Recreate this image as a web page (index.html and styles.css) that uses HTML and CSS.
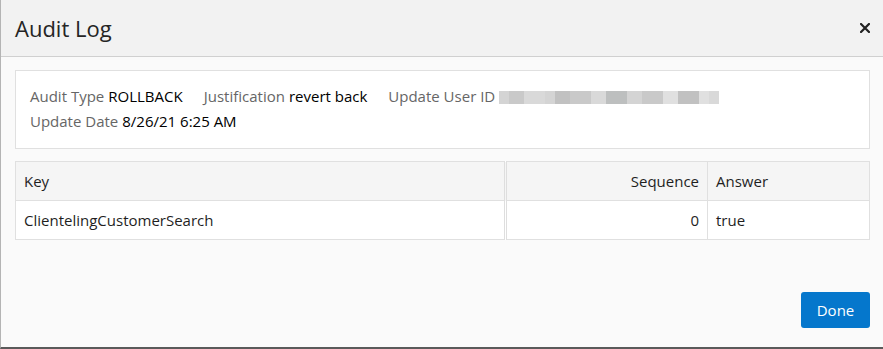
FILE: index.html
```html
<!DOCTYPE html>
<html lang="en">
<head>
    <meta charset="UTF-8">
    <title>Audit Log</title>
    <link rel="stylesheet" href="styles.css">
</head>
<body>
    <div class="modal">
        <div class="modal-header">
            <h1 class="modal-title">Audit Log</h1>
            <svg class="close" width="10" height="10" viewBox="0 0 10 10">
                <path d="M1 1 L9 9 M9 1 L1 9" stroke="#222" stroke-width="2.2" stroke-linecap="square"/>
            </svg>
        </div>
        <div class="modal-body">
            <div class="info-box">
                <div class="info-line">
                    <span class="item"><span class="label">Audit Type</span> ROLLBACK</span>
                    <span class="item"><span class="label">Justification</span> revert back</span>
                    <span class="item"><span class="label">Update User ID</span>
                        <span class="blur">
                            <i class="px a w1"></i><i class="px b w2"></i><i class="px c w3"></i><i class="px a w1"></i><i class="px d w2"></i><i class="px b w3"></i><i class="px c w2"></i><i class="px e w3"></i><i class="px a w2"></i><i class="px b w3"></i><i class="px f w2"></i><i class="px d w3"></i><i class="px f w1"></i><i class="px c w1"></i>
                        </span>
                    </span>
                </div>
                <div class="info-line">
                    <span class="item"><span class="label">Update Date</span> 8/26/21 6:25 AM</span>
                </div>
            </div>

            <table class="grid">
                <thead>
                    <tr>
                        <th class="col-key">Key</th>
                        <th class="col-seq">Sequence</th>
                        <th class="col-ans">Answer</th>
                    </tr>
                </thead>
                <tbody>
                    <tr>
                        <td class="col-key">ClientelingCustomerSearch</td>
                        <td class="col-seq">0</td>
                        <td class="col-ans">true</td>
                    </tr>
                </tbody>
            </table>

            <div class="modal-footer">
                <button class="btn-done">Done</button>
            </div>
        </div>
    </div>
</body>
</html>
```

FILE: styles.css
```css
body {
    margin: 0;
    font-family: "Open Sans", "Noto Sans", Arial, sans-serif;
    background-color: #fafafa;
}
.modal {
    width: 882px;
    height: 347px;
    border-left: 1px solid #b4b4b4;
    border-bottom: 2px solid #5a5a5a;
    background-color: #fafafa;
    display: flex;
    flex-direction: column;
}
.modal-header {
    height: 56px;
    background-color: #f2f2f2;
    border-bottom: 1px solid #d0d0d0;
    display: flex;
    justify-content: space-between;
    align-items: center;
    padding: 0 14px;
}
.modal-title {
    margin: 0;
    font-size: 22px;
    font-weight: normal;
    color: #252525;
}
.close {
    margin-right: -1px;
    cursor: pointer;
}
.modal-body {
    flex-grow: 1;
    padding: 13px 13px 0 14px;
    display: flex;
    flex-direction: column;
}
.info-box {
    background-color: #fff;
    border: 1px solid #e0e0e0;
    padding: 13px 14px 14px;
    font-size: 15px;
    line-height: 25px;
    color: #000;
}
.info-line {
    display: flex;
    gap: 21px;
    align-items: center;
}
.label {
    color: #666;
}
.item {
    display: flex;
    align-items: center;
    gap: 4px;
}
.blur {
    display: flex;
    height: 13px;
    margin-top: 1px;
}
.px {
    height: 13px;
}
.px.a { background-color: #d4d4d4; }
.px.b { background-color: #c9c9c9; }
.px.c { background-color: #d9d9d9; }
.px.d { background-color: #c1c1c1; }
.px.e { background-color: #bdbfbf; }
.px.f { background-color: #e0e0e0; }
.px.w1 { width: 10px; }
.px.w2 { width: 15px; }
.px.w3 { width: 21px; }
.grid {
    margin-top: 12px;
    width: 100%;
    border-collapse: collapse;
    font-size: 15px;
    color: #1f1f1f;
    background-color: #fff;
    border: 1px solid #e0e0e0;
}
.grid th,
.grid td {
    height: 38px;
    padding: 0 8px;
    font-weight: normal;
    text-align: left;
    border: 1px solid #e0e0e0;
}
.grid th {
    background-color: #f5f5f5;
}
.grid .col-key {
    width: 472px;
    border-right: 3px double #dedede;
}
.grid .col-seq {
    width: 184px;
    text-align: right;
}
.grid .col-ans {
    width: auto;
}
.modal-footer {
    margin-top: auto;
    margin-bottom: 19px;
    display: flex;
    justify-content: flex-end;
}
.btn-done {
    width: 69px;
    height: 36px;
    background-color: #0577cc;
    color: #fff;
    border: none;
    border-radius: 3px;
    font-family: inherit;
    font-size: 15px;
    cursor: pointer;
}
```
